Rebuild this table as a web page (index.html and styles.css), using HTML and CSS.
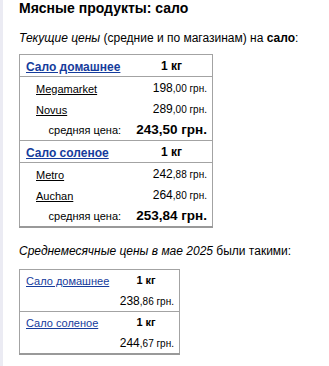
FILE: index.html
```html
<!DOCTYPE html>
<html lang="ru">
<head>
<meta charset="utf-8">
<title>Мясные продукты: сало</title>
<link rel="stylesheet" href="styles.css">
</head>
<body>
<div class="page">
  <h1 class="title">Мясные продукты: сало</h1>
  <p class="intro"><i>Текущие цены</i> (средние и по магазинам) на <b>сало</b>:</p>
  <table class="prices">
    <colgroup><col class="c1"><col class="c2"></colgroup>
    <tr class="head">
      <td class="name"><a href="#" class="prod">Сало домашнее</a></td>
      <td class="unit">1 кг</td>
    </tr>
    <tr class="shop first">
      <td class="sname"><a href="#" class="store">Megamarket</a></td>
      <td class="price">198<small>,00 грн.</small></td>
    </tr>
    <tr class="shop">
      <td class="sname"><a href="#" class="store">Novus</a></td>
      <td class="price">289<small>,00 грн.</small></td>
    </tr>
    <tr class="avg">
      <td class="alabel">средняя цена:</td>
      <td class="aprice">243,50 грн.</td>
    </tr>
    <tr class="head sep">
      <td class="name"><a href="#" class="prod">Сало соленое</a></td>
      <td class="unit">1 кг</td>
    </tr>
    <tr class="shop first">
      <td class="sname"><a href="#" class="store">Metro</a></td>
      <td class="price">242<small>,88 грн.</small></td>
    </tr>
    <tr class="shop">
      <td class="sname"><a href="#" class="store">Auchan</a></td>
      <td class="price">264<small>,80 грн.</small></td>
    </tr>
    <tr class="avg">
      <td class="alabel">средняя цена:</td>
      <td class="aprice">253,84 грн.</td>
    </tr>
  </table>
  <p class="intro month"><i>Среднемесячные цены в мае 2025</i> были такими:</p>
  <table class="monthly">
    <colgroup><col class="m1"><col class="m2"></colgroup>
    <tr class="mtop">
      <td class="mname"><a href="#" class="mprod">Сало домашнее</a></td>
      <td class="munit">1 кг</td>
    </tr>
    <tr class="mbottom">
      <td></td>
      <td class="mprice">238<small>,86 грн.</small></td>
    </tr>
    <tr class="mtop sep">
      <td class="mname"><a href="#" class="mprod">Сало соленое</a></td>
      <td class="munit">1 кг</td>
    </tr>
    <tr class="mbottom">
      <td></td>
      <td class="mprice">244<small>,67 грн.</small></td>
    </tr>
  </table>
</div>
</body>
</html>
```

FILE: styles.css
```css
html, body {
  margin: 0;
  padding: 0;
  background: #fff;
}
body {
  font-family: "Liberation Sans", Arial, sans-serif;
  color: #000;
}
.page {
  border-left: 3px solid #ebebf3;
  padding: 0 8px 0 16px;
  min-height: 366px;
  box-sizing: border-box;
}
.title {
  font-size: 14px;
  font-weight: bold;
  margin: 0;
  padding-top: 1px;
  line-height: 14px;
}
.intro {
  font-size: 12px;
  line-height: 15px;
  margin: 16px 0 8px;
  white-space: nowrap;
}
.intro b { font-weight: bold; }

table {
  border-collapse: collapse;
  border: 1px solid #a3a3a3;
  border-bottom: 2px solid #999;
  table-layout: fixed;
}
td { padding: 0; }

.prices { width: 194px; }
.prices .c1 { width: 111px; }
.prices .c2 { width: 81px; }

.head td { height: 21px; border-bottom: 1px solid #a3a3a3; }
.sep td { border-top: 1px solid #a3a3a3; }
.prod {
  color: #163c9c;
  font-weight: bold;
  font-size: 12px;
}
.name { padding-left: 6px; }
.unit {
  text-align: center;
  font-weight: bold;
  font-size: 12px;
}
.shop td { height: 21px; }
.sname { padding-left: 16px; }
.store {
  color: #000;
  font-size: 11px;
}
.price {
  text-align: right;
  padding-right: 5px;
  font-size: 12px;
}
.price small, .mprice small { font-size: 10px; }
.avg td { height: 21px; }
.alabel {
  text-align: right;
  padding-right: 10px;
  font-size: 11px;
}
.aprice {
  text-align: right;
  padding-right: 5px;
  font-weight: bold;
  font-size: 13.5px;
}

.month { margin: 16px 0 10px; }
.monthly { width: 161px; }
.monthly .m1 { width: 93px; }
.monthly .m2 { width: 66px; }
.mtop td { height: 20px; }
.mbottom td { height: 21px; }
.mname { padding-left: 6px; }
.mprod { color: #163c9c; font-size: 11px; }
.munit { text-align: center; font-weight: bold; font-size: 11px; }
.mprice { text-align: right; padding-right: 5px; font-size: 12px; }
```
